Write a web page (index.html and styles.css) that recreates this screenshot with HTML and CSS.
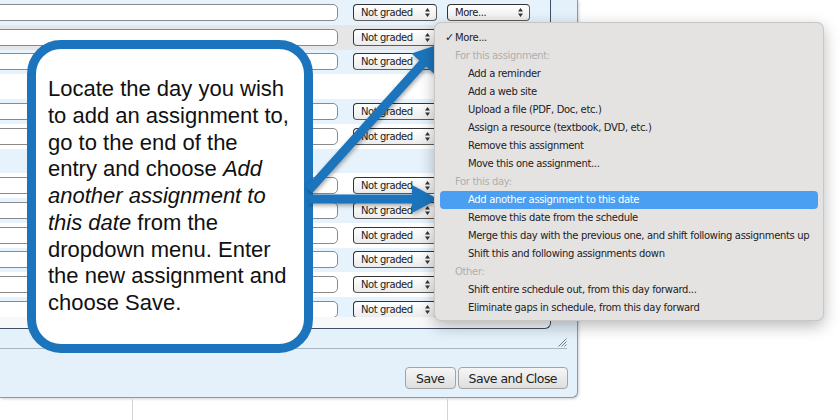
FILE: index.html
```html
<!DOCTYPE html>
<html lang="en">
<head>
<meta charset="utf-8">
<title>Schedule</title>
<link rel="stylesheet" href="styles.css">
</head>
<body>
<div class="page">
  <div class="dialog">
    <div class="frame">
      <div class="rows">
        <div class="row blue"><div class="inp"></div><div class="sel">Not graded<svg class="ud" viewBox="0 0 5 9"><path d="M2.5 0 5 3.4H0Z M2.5 9 5 5.6H0Z"/></svg></div><div class="sel more">More...<svg class="ud" viewBox="0 0 5 9"><path d="M2.5 0 5 3.4H0Z M2.5 9 5 5.6H0Z"/></svg></div></div>
        <div class="row grey"><div class="inp"></div><div class="sel">Not graded<svg class="ud" viewBox="0 0 5 9"><path d="M2.5 0 5 3.4H0Z M2.5 9 5 5.6H0Z"/></svg></div></div>
        <div class="row blue"><div class="inp"></div><div class="sel">Not graded<svg class="ud" viewBox="0 0 5 9"><path d="M2.5 0 5 3.4H0Z M2.5 9 5 5.6H0Z"/></svg></div></div>
        <div class="row white"></div>
        <div class="row blue"><div class="inp"></div><div class="sel">Not graded<svg class="ud" viewBox="0 0 5 9"><path d="M2.5 0 5 3.4H0Z M2.5 9 5 5.6H0Z"/></svg></div></div>
        <div class="row white"><div class="inp"></div><div class="sel">Not graded<svg class="ud" viewBox="0 0 5 9"><path d="M2.5 0 5 3.4H0Z M2.5 9 5 5.6H0Z"/></svg></div></div>
        <div class="row blue"></div>
        <div class="row white"><div class="inp"></div><div class="sel">Not graded<svg class="ud" viewBox="0 0 5 9"><path d="M2.5 0 5 3.4H0Z M2.5 9 5 5.6H0Z"/></svg></div></div>
        <div class="row blue"><div class="inp"></div><div class="sel">Not graded<svg class="ud" viewBox="0 0 5 9"><path d="M2.5 0 5 3.4H0Z M2.5 9 5 5.6H0Z"/></svg></div></div>
        <div class="row white"><div class="inp"></div><div class="sel">Not graded<svg class="ud" viewBox="0 0 5 9"><path d="M2.5 0 5 3.4H0Z M2.5 9 5 5.6H0Z"/></svg></div></div>
        <div class="row blue"><div class="inp"></div><div class="sel">Not graded<svg class="ud" viewBox="0 0 5 9"><path d="M2.5 0 5 3.4H0Z M2.5 9 5 5.6H0Z"/></svg></div></div>
        <div class="row white"><div class="inp"></div><div class="sel">Not graded<svg class="ud" viewBox="0 0 5 9"><path d="M2.5 0 5 3.4H0Z M2.5 9 5 5.6H0Z"/></svg></div></div>
        <div class="row blue"><div class="inp"></div><div class="sel">Not graded<svg class="ud" viewBox="0 0 5 9"><path d="M2.5 0 5 3.4H0Z M2.5 9 5 5.6H0Z"/></svg></div></div>
      </div>
    </div>
    <div class="resize">
      <svg class="grip" viewBox="0 0 10 10"><path d="M9.5 1.5 1.5 9.5 M9.5 4.5 4.5 9.5 M9.5 7.5 7.5 9.5"/></svg>
    </div>
    <div class="actions">
      <button class="btn">Save</button>
      <button class="btn">Save and Close</button>
    </div>
  </div>
  <div class="below">
    <div class="col c1"></div>
    <div class="col c2"></div>
  </div>

  <div class="callout">
    <p class="callout-text">Locate the day you wish<br>to add an assignment to,<br>go to the end of the<br>entry and choose <i>Add</i><br><i>another assignment to</i><br><i>this date</i> from the<br>dropdown menu. Enter<br>the new assignment and<br>choose Save.</p>
  </div>

  <svg class="arrows" viewBox="0 0 840 420">
    <g class="arrow">
      <line x1="309" y1="190" x2="423.5" y2="62.5"/>
      <polygon points="440,44 433.9,73.4 411.5,53.4"/>
      <line x1="309" y1="199" x2="414" y2="199"/>
      <polygon points="438,199 412,185 412,213"/>
    </g>
  </svg>

  <div class="menu">
    <div class="mi chk"><span class="check">✓</span>More...</div>
    <div class="mi hdr">For this assignment:</div>
    <div class="mi">Add a reminder</div>
    <div class="mi">Add a web site</div>
    <div class="mi">Upload a file (PDF, Doc, etc.)</div>
    <div class="mi">Assign a resource (textbook, DVD, etc.)</div>
    <div class="mi">Remove this assignment</div>
    <div class="mi">Move this one assignment...</div>
    <div class="mi hdr">For this day:</div>
    <div class="mi active">Add another assignment to this date</div>
    <div class="mi">Remove this date from the schedule</div>
    <div class="mi">Merge this day with the previous one, and shift following assignments up</div>
    <div class="mi">Shift this and following assignments down</div>
    <div class="mi hdr">Other:</div>
    <div class="mi">Shift entire schedule out, from this day forward...</div>
    <div class="mi">Eliminate gaps in schedule, from this day forward</div>
  </div>
</div>
</body>
</html>
```

FILE: styles.css
```css
* { box-sizing: border-box; }

html, body {
  margin: 0;
  padding: 0;
  background: #ffffff;
}

.page {
  position: relative;
  width: 840px;
  height: 420px;
  overflow: hidden;
  background: #ffffff;
  font-family: "DejaVu Sans", Verdana, sans-serif;
}

/* ---------- dialog ---------- */
.dialog {
  width: 578px;
  height: 398px;
  background: #e4f0fa;
  border-right: 1px solid #8d9aa6;
  border-bottom: 1px solid #8d9aa6;
  border-bottom-right-radius: 6px;
  box-shadow: 1px 1px 3px rgba(0, 0, 0, 0.18);
  display: flex;
  flex-direction: column;
}

.frame {
  width: 551px;
  height: 329px;
  background: #f6f8fa;
  border-right: 1px solid #3e5064;
  border-bottom: 1px solid #3e5064;
  border-bottom-right-radius: 6px;
  overflow: hidden;
}

.rows {
  height: 317px;
  overflow: hidden;
}

.row {
  height: 24.75px;
  display: flex;
  align-items: center;
}
.row.blue { background: #e6f2fc; }
.row.white { background: #ffffff; }
.row.grey { background: #e6e6e6; }

.inp {
  width: 350px;
  height: 17px;
  margin-left: -12px;
  background: #ffffff;
  border: 1px solid #8a8a8a;
  border-radius: 5px;
}

.sel {
  position: relative;
  width: 84px;
  height: 17px;
  margin-left: 15px;
  padding-left: 7px;
  display: flex;
  align-items: center;
  font-size: 10px;
  letter-spacing: -0.45px;
  color: #1a1a1a;
  background: linear-gradient(#ffffff, #ececec);
  border: 1px solid #5c5c5c;
  border-top-color: #333;
  border-left-color: #333;
  border-radius: 4px;
  white-space: nowrap;
}
.sel.more {
  width: 83px;
  margin-left: 10px;
}

.ud {
  position: absolute;
  right: 6px;
  top: 3px;
  width: 5px;
  height: 9px;
  fill: #333;
}

.resize {
  width: 567px;
  height: 20px;
  border-bottom: 1px solid #a9b5c0;
  display: flex;
  justify-content: flex-end;
  align-items: flex-end;
  padding: 0 0 1px 0;
}

.grip {
  width: 10px;
  height: 10px;
  stroke: #6f7a84;
  stroke-width: 1;
  fill: none;
}

.actions {
  display: flex;
  justify-content: flex-end;
  gap: 2px;
  padding-right: 9px;
  margin-top: 18px;
}

.btn {
  height: 22px;
  padding: 0 10px;
  font-family: "DejaVu Sans", Verdana, sans-serif;
  font-size: 12.5px;
  letter-spacing: -0.55px;
  color: #222;
  background: linear-gradient(#f6f6f6, #dedede);
  border: 1px solid #a3a3a3;
  border-radius: 4px;
}

.below {
  display: flex;
  height: 22px;
  margin-top: 1px;
}
.col { height: 100%; border-right: 1px solid #d4d4d4; }
.c1 { width: 133px; }
.c2 { width: 315px; }

/* ---------- callout ---------- */
.callout {
  position: absolute;
  left: 27px;
  top: 40px;
  width: 286px;
  height: 313px;
  background: #ffffff;
  border: 9px solid #1c75bc;
  border-radius: 34px;
  padding: 27px 0 0 12px;
}

.callout-text {
  margin: 0;
  font-family: "Liberation Sans", Arial, sans-serif;
  font-size: 22px;
  line-height: 26.75px;
  color: #111;
  white-space: nowrap;
}

/* ---------- arrows ---------- */
.arrows {
  position: absolute;
  left: 0;
  top: 0;
  width: 840px;
  height: 420px;
  pointer-events: none;
  filter: drop-shadow(1px 2px 2px rgba(0, 0, 0, 0.35));
}
.arrow line {
  stroke: #1c75bc;
  stroke-width: 9;
}
.arrow polygon {
  fill: #1c75bc;
}

/* ---------- menu ---------- */
.menu {
  position: absolute;
  left: 434px;
  top: 22px;
  width: 390px;
  height: 299px;
  padding: 6px 5px;
  background: #e5e3e2;
  border: 1px solid rgba(0, 0, 0, 0.12);
  border-radius: 7px;
  box-shadow: 0 5px 16px rgba(0, 0, 0, 0.28);
}

.mi {
  position: relative;
  height: 18px;
  line-height: 18px;
  padding-left: 28px;
  font-size: 10px;
  letter-spacing: -0.35px;
  color: #222;
  white-space: nowrap;
  border-radius: 4px;
}
.mi.hdr {
  padding-left: 15px;
  color: #b0aeac;
}
.mi.chk {
  padding-left: 15px;
}
.check {
  position: absolute;
  left: 5px;
  top: 0;
  font-size: 11px;
}
.mi.active {
  background: #4a9ff3;
  color: #ffffff;
}
```
